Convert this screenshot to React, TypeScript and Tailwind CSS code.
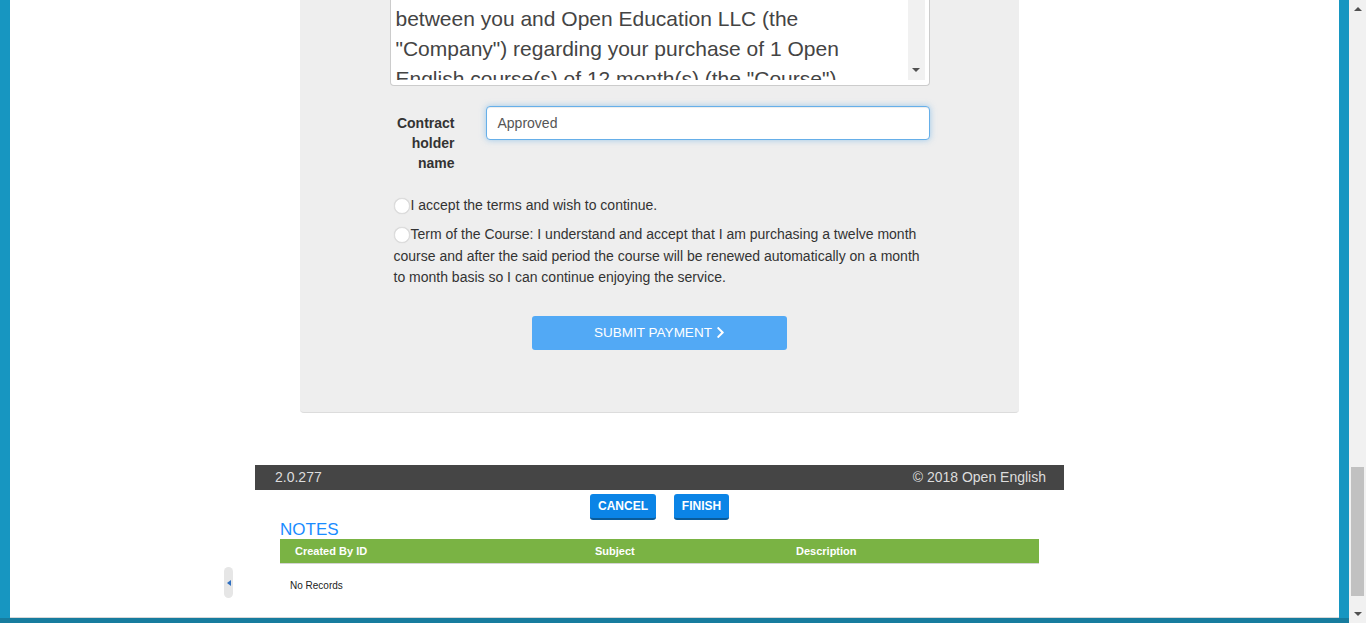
import React from "react";

function Chevron() {
  return (
    <svg viewBox="0 0 320 512" className="inline-block h-[13px] w-[9px] ml-[4px] align-[-1px]" fill="currentColor">
      <path d="M285.476 272.971L91.132 467.314c-9.373 9.373-24.569 9.373-33.941 0l-22.667-22.667c-9.357-9.357-9.375-24.522-.04-33.901L188.505 256 34.484 101.255c-9.335-9.379-9.317-24.544.04-33.901l22.667-22.667c9.373-9.373 24.569-9.373 33.941 0L285.475 239.03c9.373 9.372 9.373 24.568.001 33.941z" />
    </svg>
  );
}

function Radio() {
  return (
    <span className="inline-block w-[16px] h-[16px] mr-[1px] rounded-full bg-white border border-[#dddddd] shadow-[0_0_1px_rgba(0,0,0,0.15)] align-[-4px]" />
  );
}

export default function App() {
  return (
    <div className="w-[1366px] h-[623px] flex overflow-hidden font-['Liberation_Sans',Arial,sans-serif] bg-[#1796c1]">
      <div className="flex-1 flex flex-col">
        <div className="flex-1 px-[10px] bg-[#1796c1] flex">
          <div className="relative flex-1 bg-white flex flex-col border-b border-[#d8d8d8]">
            {/* Gray panel */}
            <div className="ml-[290px] w-[719px] h-[413px] bg-[#eeeeee] rounded-b-[4px] border-b border-[#dcdcdc] flex flex-col">
              <div className="w-[540px] mx-auto flex flex-col">
                {/* textarea */}
                <div className="h-[86px] bg-white border-x border-b border-[#cccccc] rounded-b-[4px] flex pl-[5px] pr-[4px] pb-[5px]">
                  <div className="flex-1 overflow-hidden pt-[4px] text-[21px] leading-[30px] text-[#444444] whitespace-nowrap">
                    <div>between you and Open Education LLC (the</div>
                    <div>"Company") regarding your purchase of 1 Open</div>
                    <div>English course(s) of 12 month(s) (the "Course")</div>
                  </div>
                  <div className="w-[17px] bg-[#f1f1f1] flex flex-col justify-end items-center pb-[8px]">
                    <div className="w-0 h-0 border-l-[4px] border-r-[4px] border-t-[4px] border-l-transparent border-r-transparent border-t-[#505050]" />
                  </div>
                </div>

                {/* contract holder */}
                <div className="mt-[20px] flex items-start">
                  <div className="w-[65px] pt-[7px] text-right font-bold text-[14px] leading-[20px] text-[#333333]">
                    Contract holder name
                  </div>
                  <div className="ml-[31px] w-[444px] h-[34px] bg-white border border-[#66afe9] rounded-[4px] shadow-[inset_0_1px_1px_rgba(0,0,0,0.075),0_0_6px_rgba(102,175,233,0.6)] flex items-center pl-[11px] text-[14px] text-[#555555]">
                    Approved
                  </div>
                </div>

                {/* radios */}
                <div className="mt-[22px] pl-[4px] text-[14px] leading-[21.4px] text-[#333333]">
                  <div>
                    <Radio />I accept the terms and wish to continue.
                  </div>
                  <div className="mt-[8px]">
                    <Radio />Term of the Course: I understand and accept that I am purchasing a twelve month
                    <br />
                    course and after the said period the course will be renewed automatically on a month
                    <br />
                    to month basis so I can continue enjoying the service.
                  </div>
                </div>
              </div>

              <div className="mt-[27px] mx-auto w-[255px] h-[34px] rounded-[3px] bg-[#52a9f5] flex items-center justify-center text-white text-[13.5px] uppercase">
                Submit Payment
                <Chevron />
              </div>
            </div>

            {/* footer area */}
            <div className="mt-[52px] ml-[245px] w-[809px] flex flex-col">
              <div className="h-[25px] bg-[#454545] flex items-center justify-between pl-[20px] pr-[18px] text-[14px] text-[#dddddd]">
                <span>2.0.277</span>
                <span>© 2018 Open English</span>
              </div>
              <div className="mt-[4px] flex justify-center gap-[18px]">
                <div className="h-[26px] w-[66px] rounded-[3px] bg-[#0b84e6] border-b-[2px] border-[#0a5b99] flex items-center justify-center text-white font-bold text-[12px]">
                  CANCEL
                </div>
                <div className="h-[26px] w-[55px] rounded-[3px] bg-[#0b84e6] border-b-[2px] border-[#0a5b99] flex items-center justify-center text-white font-bold text-[12px]">
                  FINISH
                </div>
              </div>
              <div className="ml-[25px] text-[17px] leading-[19px] text-[#1a8cff]">NOTES</div>
              <div className="ml-[25px] w-[759px]">
                <div className="h-[25px] bg-[#7ab344] border-b border-[#d4d4d4] flex items-center text-white font-bold text-[11px]">
                  <div className="w-[300px] pl-[15px]">Created By ID</div>
                  <div className="w-[201px] pl-[15px]">Subject</div>
                  <div className="flex-1 pl-[15px]">Description</div>
                </div>
                <div className="mt-[16px] pl-[10px] text-[10px] leading-[12px] text-[#222222]">No Records</div>
              </div>
            </div>

            {/* side tab */}
            <div className="absolute left-[214px] top-[567px] w-[9px] h-[31px] rounded-full bg-[#e6e6e6] flex items-center justify-center">
              <div className="w-0 h-0 border-t-[3px] border-b-[3px] border-r-[4px] border-t-transparent border-b-transparent border-r-[#2f6fc0]" />
            </div>
          </div>
        </div>
        <div className="h-[5px] bg-[#177c9e]" />
      </div>

      {/* page scrollbar */}
      <div className="w-[17px] h-full bg-[#f1f1f1] flex flex-col items-center">
        <div className="h-[17px] flex items-center justify-center">
          <div className="w-0 h-0 border-l-[4px] border-r-[4px] border-b-[4px] border-l-transparent border-r-transparent border-b-[#505050]" />
        </div>
        <div className="mt-[450px] w-[13px] h-[129px] bg-[#c1c1c1]" />
        <div className="flex-1 flex items-end pb-[7px]">
          <div className="w-0 h-0 border-l-[4px] border-r-[4px] border-t-[4px] border-l-transparent border-r-transparent border-t-[#505050]" />
        </div>
      </div>
    </div>
  );
}
